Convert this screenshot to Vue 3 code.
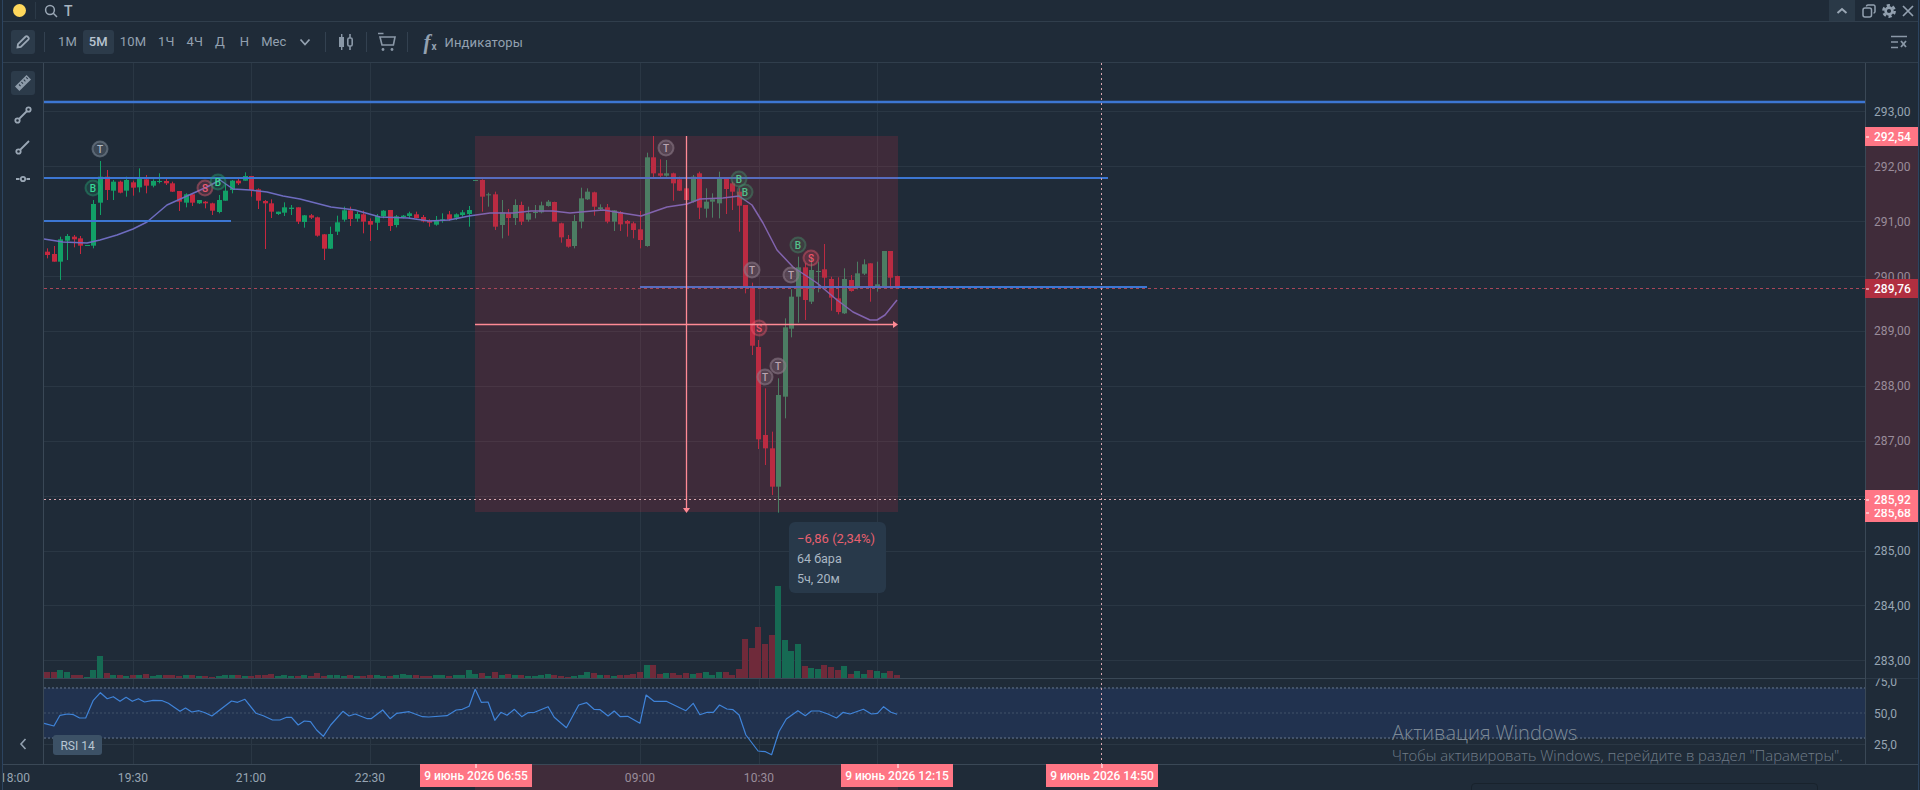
<script setup>
const intervals = [
  { t: '1М' }, { t: '5М', on: true }, { t: '10М' }, { t: '1Ч' }, { t: '4Ч' }, { t: 'Д' }, { t: 'Н', gap: true }, { t: 'Мес' }
]

const seg = (off, rows) => rows.map(r => ({ wt: off + r[0] / 3, bt: off + r[1] / 3, bb: off + r[2] / 3, wb: off + r[3] / 3, up: r[4] === 1 }))

const rowsA = [
  [355,365,375,385,0],[348,372,395,395,0],[320,328,395,450,1],[312,318,332,390,1],[315,320,328,352,0],[318,325,347,372,0],
  [345,345,347,347,1],[210,222,347,355,1],[93,140,218,255,1],[120,140,180,210,0],[150,155,182,210,1],[152,155,188,190,0],
  [140,150,182,200,1],[152,157,173,197,0],[115,145,172,187,1],[135,148,167,190,0],[148,153,167,172,1],[130,153,156,160,1],
  [145,153,160,165,0],[155,160,185,186,0],[183,183,215,243,0],[190,193,218,232,1],[190,193,218,228,0],[210,210,220,222,1],
  [213,215,220,235,0],[218,220,242,255,0],[195,210,246,250,1],[160,182,212,212,1],[150,152,180,190,1],[145,152,160,165,0],
  [127,138,152,152,1],[138,138,180,200,0],[175,178,212,237,0],[210,213,220,357,0],[208,220,245,264,0],[245,245,252,255,1],
  [217,232,248,258,1],[225,233,237,255,1],[232,232,275,282,0]
]
const rowsB = [
  [195,196,216,233,1],[192,196,203,207,0],[200,202,257,260,0],[252,253,296,330,0],[230,252,296,297,1],[197,217,245,255,1],
  [170,181,209,215,1],[170,181,207,228,0],[185,192,206,215,1],[182,193,215,250,0],[205,213,224,273,0],[192,198,218,240,1],
  [180,182,199,205,1],[180,180,228,243,0],[195,199,225,232,1],[195,197,201,205,1],[185,190,198,207,1],[185,193,204,205,0],
  [195,201,214,217,0],[208,212,218,230,0],[198,212,224,227,1],[190,208,211,218,1],[183,193,209,213,0],[190,193,203,210,1],
  [180,187,195,200,1],[168,180,192,230,1],[90,90,92,92,1],[88,90,140,185,0],[128,133,136,170,1],[125,133,230,240,0],
  [150,187,225,265,1],[177,190,204,257,0],[148,165,204,225,1],[155,165,215,225,0],[170,190,209,215,1],[165,186,189,205,1],
  [155,166,187,190,1],[150,155,168,170,1],[155,156,215,215,0],[218,220,262,278,0],[255,267,290,293,0],[195,213,288,295,1],
  [113,145,215,235,1],[115,125,148,150,1],[125,127,170,197,0],[163,172,177,182,1],[162,172,215,220,0],[180,181,215,243,1],
  [183,186,223,243,0],[210,213,221,260,0]
]
const rowsC = [
  [275,280,300,325,0],[243,298,330,355,0],[68,82,348,350,1],[18,82,130,145,0],[88,130,137,145,0],[90,130,137,140,1],
  [128,130,160,212,0],[140,148,182,183,0],[175,175,210,212,0],[135,140,215,218,1],[125,130,233,267,0],[175,215,236,263,1],
  [190,208,215,263,1],[125,143,220,265,1],[145,147,177,252,0],[155,160,185,240,0],[175,185,227,305,0],[225,225,472,490,0],
  [458,470,647,675,0],[630,651,928,957,0],[775,915,955,1005,0],[905,955,1070,1095,0],[745,795,1070,1148,1],[565,592,800,865,1],
  [478,500,596,622,1],[380,412,500,578,1],[400,412,510,570,0],[380,420,515,522,1],[395,423,426,487,1],[342,418,443,470,0],
  [440,447,503,542,0],[442,505,546,553,0],[415,447,550,552,1],[435,450,483,485,0],[395,430,473,478,1],[388,403,431,435,1],
  [400,400,472,515,0],[395,463,472,485,1],[363,363,468,470,1],[363,363,443,470,0],[437,438,475,475,0]
]

const volHead = [
  6,6,8,6,3,3,1,8,22,5,3,3,2,3,3,4,2,3,3,3,2,3,3,2,2,1,2,3,3,3,2,2,3,3,4,2,
  3,2,2,3,2,5,2,3,3,2,3,2,2,3,3,2,2,3,4,3,3,2,2,3,3,2,3,3,8,4,5,2,6,3,4,3,3,2,2,3,4,3,2,1,2,3,6,5,3,3,2,3,3,4,6
]
const volTail = [
  13,13,4,5,5,3,
  5,4,5,6,3,6,6,3,9,39,30,51,34,43,92,38,27,34,12,10,9,13,11,8,12,4,7,4,8,7,5,7,3
]

const candles = [...seg(130, rowsA), ...seg(150, rowsB), ...seg(130, rowsC)].map((c, i) => {
  const x = Math.round(47.3 + i * 6.585)
  const v = i >= 91 ? volTail[i - 91] : (volHead[i] ?? 2)
  return { ...c, id: i, x, h: Math.max(c.bb - c.bt, 1), v, cls: (c.up ? 'cg' : 'cr') + (x >= 475 ? ' inbox' : '') }
})

const ma = '44,239 63,242 87,243 100,240 117,235 133,229 147,222 167,205 187,196 207,187 220,180 233,189 250,190 267,192 283,196 300,199 331,207 355,210 380,217 408,218 429,221 449,220 469,216 490,213 513,213 531,211 553,211 570,213 603,210 641,216 667,207 687,204 700,199 723,198 739,196 752,205 763,223 777,250 793,267 817,283 837,300 853,312 870,320 877,320 885,315 897,300'

const rsiRaw = [[72,250],[88,258],[98,226],[110,222],[120,224],[130,234],[140,234],[152,182],[164,158],[175,176],[185,170],[196,184],[206,172],[216,184],[226,176],[236,186],[250,181],[265,182],[275,190],[294,214],[303,204],[313,216],[325,212],[335,218],[346,228],[378,183],[388,187],[400,178],[418,220],[430,227],[445,240],[457,240],[468,232],[476,232],[487,255],[497,243],[507,245],[517,270],[528,289],[540,255],[560,214],[570,228],[580,222],[600,236],[606,236],[625,210],[637,236],[648,220],[668,215],[690,230],[700,231],[730,227],[745,210],[755,208],[766,199],[776,148],[786,187],[797,186],[808,241],[818,217],[828,226],[840,208],[852,230],[862,218],[873,217],[895,200],[905,232],[925,263],[945,195],[958,188],[970,208],[980,209],[993,228],[1003,213],[1013,230],[1025,229],[1045,250],[1055,165],[1068,184],[1088,184],[1120,212],[1132,190],[1143,224],[1155,217],[1165,217],[1175,195],[1187,207],[1197,209],[1207,225],[1218,285],[1238,333],[1250,335],[1260,344],[1272,275],[1284,237],[1303,212],[1315,227],[1325,213],[1338,213],[1352,222],[1366,234],[1377,217],[1388,222],[1410,208],[1423,222],[1433,220],[1443,200],[1455,217],[1465,223]]
const rsi = rsiRaw.map(([x, y]) => `${(x / 1.633).toFixed(1)},${(640 + y / 3).toFixed(1)}`).join(' ')

const priceY = p => 111.3 + (293 - p) * 54.9
const prices = [293, 292, 291, 290, 289, 288, 287, 286, 285, 284, 283]
const hGrid = prices.map(p => Math.round(priceY(p)) + 0.5)
const priceLabels = prices.filter(p => p !== 286).map(p => ({
  y: priceY(p) + 4.5,
  t: p + ',00',
  band: p <= 292 && p >= 286
}))
const vGrid = [133.5, 251.5, 370.5, 640.5, 759.5, 877.5]

const times = [
  { x: 15, t: '18:00' }, { x: 133, t: '19:30' }, { x: 251, t: '21:00' }, { x: 370, t: '22:30' },
  { x: 640, t: '09:00', band: true }, { x: 759, t: '10:30', band: true }
]
const timeTags = [
  { x: 420, cx: 476, t: '9 июнь 2026 06:55', tick: 475.5 },
  { x: 841, cx: 897, t: '9 июнь 2026 12:15', tick: 897.5 },
  { x: 1046, cx: 1102, t: '9 июнь 2026 14:50', tick: 1101.5 }
]
const badges = [
  { x: 100, y: 149, t: 'T', k: 'bt' }, { x: 93, y: 188, t: 'B', k: 'bb' }, { x: 205, y: 188, t: 'S', k: 'bs' },
  { x: 218, y: 182, t: 'B', k: 'bb' }, { x: 666, y: 148, t: 'T', k: 'bt' }, { x: 739, y: 179, t: 'B', k: 'bb' },
  { x: 745, y: 192, t: 'B', k: 'bb' }, { x: 752, y: 270, t: 'T', k: 'bt' }, { x: 798, y: 245, t: 'B', k: 'bb' },
  { x: 811, y: 258, t: 'S', k: 'bs' }, { x: 791, y: 275, t: 'T', k: 'bt' }, { x: 759, y: 328, t: 'S', k: 'bs' },
  { x: 765, y: 377, t: 'T', k: 'bt' }, { x: 778, y: 366, t: 'T', k: 'bt' }
]
const priceTags = [
  { y: 505, h: 17, ty: 517, t: '285,68', c: 'pink', tick: 512.5 },
  { y: 490, h: 19, ty: 504, t: '285,92', c: 'pink', tick: 499.5 },
  { y: 279, h: 19, ty: 293, t: '289,76', c: 'dark', tick: 288.5 },
  { y: 127, h: 19, ty: 141, t: '292,54', c: 'pink', tick: 136.5 }
]
</script>

<template>
  <div class="app">
    <header class="topbar">
      <span class="dot"></span>
      <span class="vsep"></span>
      <svg class="search" width="14" height="14" viewBox="0 0 14 14"><circle cx="6" cy="6" r="4.4" /><path d="M9.3 9.3 13 13" /></svg>
      <span class="ticker">T</span>
      <div class="topright">
        <button class="collapse"><svg width="14" height="14" viewBox="0 0 14 14"><path d="M2.5 9 7 5l4.5 4" /></svg></button>
        <svg class="wicon" width="14" height="14" viewBox="0 0 14 14"><rect x="1" y="4" width="8.5" height="9" rx="2" /><path d="M4.5 2.5V2.4A1.4 1.4 0 0 1 6 1h5.6A1.4 1.4 0 0 1 13 2.4v5.2A1.4 1.4 0 0 1 11.6 9h-.1" /></svg>
        <svg class="gear" width="14" height="14" viewBox="0 0 14 14"><circle class="teeth" cx="7" cy="7" r="5.6" /><circle class="ring" cx="7" cy="7" r="3.4" /></svg>
        <svg class="xicon" width="14" height="14" viewBox="0 0 14 14"><path d="M2 2l10 10M12 2 2 12" /></svg>
      </div>
    </header>

    <nav class="toolbar">
      <button class="ibtn">
        <svg width="16" height="16" viewBox="0 0 16 16"><path d="M2.5 13.5 3 10.2 10.7 2.5a1.2 1.2 0 0 1 1.7 0l1.1 1.1a1.2 1.2 0 0 1 0 1.7L5.8 13z" /></svg>
      </button>
      <span class="sep first"></span>
      <button v-for="b in intervals" :key="b.t" class="tf" :class="{ on: b.on, gap: b.gap }">{{ b.t }}</button>
      <button class="more"><svg width="12" height="12" viewBox="0 0 12 12"><path d="M1.5 3.5 6 8.5l4.500-5" /></svg></button>
      <span class="sep"></span>
      <svg class="tool" width="20" height="20" viewBox="0 0 20 20">
        <path class="solid" d="M5 2h1.4v3H8v10H6.4v3H5v-3H3V5h2z" />
        <path class="thin" d="M14 2v4M14 14v4" />
        <rect class="thin" x="11.8" y="6" width="4.4" height="8" rx="1.4" />
      </svg>
      <span class="sep"></span>
      <svg class="tool" width="20" height="20" viewBox="0 0 20 20">
        <path class="thin" d="M1 1.5h5.5M3 5h15l-1.6 8H5z" />
        <circle class="solid" cx="6" cy="17.5" r="1.4" /><circle class="solid" cx="15" cy="17.5" r="1.4" />
      </svg>
      <span class="sep"></span>
      <span class="fx"><i>f</i><b>x</b></span>
      <span class="indic">Индикаторы</span>
      <svg class="clear" width="18" height="14" viewBox="0 0 18 14">
        <path class="thin" d="M1 1.5h16M1 7h7M1 12.5h7" />
        <path class="thin x" d="M11 6l5 6M16 6l-5 6" />
      </svg>
    </nav>

    <main class="main">
      <aside class="tools">
        <button class="ibtn">
          <svg width="18" height="18" viewBox="0 0 18 18"><path class="solid" d="M1 12.6 12.6 1 17 5.4 5.4 17z" /><path class="notch" d="M5 10.5l1.6 1.6M7.4 8.1 9 9.7M9.8 5.7l1.6 1.6M12.2 3.3l1.6 1.6" /></svg>
        </button>
        <button class="ibtn plain">
          <svg width="18" height="18" viewBox="0 0 18 18"><circle cx="3.5" cy="14.5" r="2.2" /><circle cx="14.5" cy="3.5" r="2.2" /><path d="M5 13 13 5" /></svg>
        </button>
        <button class="ibtn plain">
          <svg width="18" height="18" viewBox="0 0 18 18"><circle cx="4.5" cy="13.5" r="2.2" /><path d="M6 12 15 3" /></svg>
        </button>
        <button class="ibtn plain">
          <svg width="18" height="18" viewBox="0 0 18 18"><circle cx="9" cy="9" r="2.2" /><path d="M2 9h3.5M12.5 9H16" /></svg>
        </button>
        <button class="back"><svg width="10" height="14" viewBox="0 0 10 14"><path d="M7.5 2 3 7l4.500 5" /></svg></button>
      </aside>

      <div class="chart">
        <svg class="plot" width="1874" height="727" viewBox="44 63 1874 727">
          <g class="grid">
            <line v-for="y in hGrid" :key="'h' + y" x1="44" x2="1865" :y1="y" :y2="y" />
            <line x1="44" x2="1865" y1="744.5" y2="744.5" />
            <line v-for="x in vGrid" :key="'v' + x" :x1="x" :x2="x" y1="63" y2="764" />
          </g>

          <rect class="rsiband" x="44" y="688" width="1821" height="50" />
          <line class="dot2" x1="44" x2="1865" y1="688" y2="688" />
          <line class="dot1" x1="44" x2="1865" y1="713" y2="713" />
          <line class="dot2" x1="44" x2="1865" y1="738" y2="738" />

          <g>
            <rect v-for="c in candles" :key="'v' + c.id" :class="c.up ? 'vg' : 'vr'" :x="c.x - 3" :y="678 - c.v" width="6" :height="c.v" />
          </g>
          <g>
            <g v-for="c in candles" :key="c.id" :class="c.cls">
              <rect :x="c.x" :y="c.wt" width="1" :height="c.wb - c.wt" />
              <rect :x="c.x - 2" :y="c.bt" width="5" :height="c.h" />
            </g>
          </g>
          <polyline class="ma" :points="ma" />

          <line class="blue" x1="44" x2="1865" y1="102" y2="102" />
          <line class="blue thinb" x1="44" x2="1108" y1="178" y2="178" />
          <line class="blue thinb" x1="44" x2="231" y1="221" y2="221" />
          <line class="blue thinb" x1="640" x2="1147" y1="287" y2="287" />

          <g v-for="(b, i) in badges" :key="'b' + i" :class="['badge', b.k]">
            <circle :cx="b.x" :cy="b.y" r="7.5" />
            <text :x="b.x" :y="b.y + 3.5" text-anchor="middle">{{ b.t }}</text>
          </g>

          <rect class="box" x="475" y="136" width="423" height="376" />

          <line class="dash-red" x1="44" x2="1865" y1="288.5" y2="288.5" />
          <line class="dash-pink" x1="44" x2="1865" y1="499.5" y2="499.5" />
          <line class="dash-pink" x1="1101.5" x2="1101.5" y1="63" y2="764" />

          <line class="arrow" x1="686.5" x2="686.5" y1="136" y2="509" />
          <path class="head" d="M683 508h7l-3.500 5z" />
          <line class="arrow" x1="475" x2="894" y1="324.500" y2="324.500" />
          <path class="head" d="M893 321v7l5-3.500z" />

          <polyline class="rsi" :points="rsi" />

          <rect class="rsitag" x="53" y="735" width="49" height="20" rx="3" />
          <text class="rsitext" x="77.500" y="749.500" text-anchor="middle">RSI 14</text>

          <rect class="axisband" x="1866" y="136" width="52" height="376" />
          <rect class="axisband" x="475" y="765" width="423" height="25" />

          <line class="axisline" x1="43.500" x2="43.500" y1="63" y2="764" />
          <line class="axisline" x1="1865.500" x2="1865.500" y1="63" y2="764" />
          <line class="axisline" x1="44" x2="1918" y1="678.500" y2="678.500" />
          <line class="axisline" x1="3" x2="1918" y1="764.500" y2="764.500" />

          <text v-for="p in priceLabels" :key="p.t" class="axt" :class="{ dim: p.band }" x="1874" :y="p.y">{{ p.t }}</text>
          <text class="axt" x="1874" y="686">75,0</text>
          <rect class="bg" x="1866" y="667" width="52" height="11.500" />
          <text class="axt" x="1874" y="718">50,0</text>
          <text class="axt" x="1874" y="749">25,0</text>

          <g v-for="p in priceTags" :key="p.t">
            <rect :class="p.c" x="1865" :y="p.y" width="53" :height="p.h" />
            <rect class="wtick" x="1866" :y="p.tick" width="3" height="1" />
            <text class="tagt" x="1874" :y="p.ty">{{ p.t }}</text>
          </g>

          <text v-for="t in times" :key="t.t" class="axt" :class="{ dim: t.band }" :x="t.x" y="782" text-anchor="middle">{{ t.t }}</text>
          <g v-for="t in timeTags" :key="t.t">
            <rect class="pink" :x="t.x" y="764" width="112" height="23" />
            <rect class="wtick" :x="t.tick" y="764" width="1" height="4" />
            <text class="tagt" :x="t.cx" y="780" text-anchor="middle">{{ t.t }}</text>
          </g>
        </svg>

        <div class="tip">
          <div class="tipred">−6,86 (2,34%)</div>
          <div>64 бара</div>
          <div>5ч, 20м</div>
        </div>

        <div class="shade"></div>
        <div class="wm">
          <div class="wm1">Активация Windows</div>
          <div class="wm2">Чтобы активировать Windows, перейдите в раздел "Параметры".</div>
        </div>
      </div>
    </main>
  </div>
</template>

<style>
html, body { margin: 0; background: #1f2b38; }
</style>

<style scoped>
.app {
  box-sizing: border-box;
  width: 1917px;
  height: 790px;
  margin-left: 2px;
  border-left: 1px solid #2c4460;
  border-right: 1px solid #2c4460;
  background: #1f2b38;
  overflow: hidden;
  font-family: Roboto, "Noto Sans", sans-serif;
  color: #93a1b0;
}
button { border: 0; background: none; padding: 0; margin: 0; font: inherit; color: inherit; display: flex; align-items: center; justify-content: center; }

.topbar {
  box-sizing: border-box;
  height: 22px;
  display: flex;
  align-items: center;
  padding-left: 10px;
  border-bottom: 1px solid #303e4c;
}
.dot { width: 13px; height: 13px; border-radius: 50%; background: #ffd85c; }
.vsep { width: 1px; height: 17px; background: #2c3a48; margin: 0 8px 0 9px; }
.search { fill: none; stroke: #9aa7b5; stroke-width: 1.500; }
.ticker { margin-left: 6px; font-size: 14px; font-weight: 500; color: #a8b4c0; }
.topright { margin-left: auto; display: flex; align-items: center; height: 21px; }
.collapse { width: 26px; height: 21px; background: #2a3947; margin-right: 7px; }
.collapse svg { fill: none; stroke: #9aa7b5; stroke-width: 2; }
.wicon { fill: none; stroke: #93a1b0; stroke-width: 1.500; margin-right: 6px; }
.gear { fill: none; margin-right: 5px; }
.teeth { stroke: #93a1b0; stroke-width: 2.600; stroke-dasharray: 3.200 2.660; }
.ring { stroke: #93a1b0; stroke-width: 2.600; }
.xicon { fill: none; stroke: #93a1b0; stroke-width: 1.700; margin-right: 3px; }

.toolbar {
  box-sizing: border-box;
  height: 41px;
  display: flex;
  align-items: center;
  padding-left: 8px;
  border-bottom: 1px solid #303e4c;
  font-size: 13px;
}
.ibtn { width: 24px; height: 24px; border-radius: 3px; background: #2c3b4a; flex: none; }
.ibtn svg { fill: none; stroke: #9aa7b5; stroke-width: 1.800; }
.ibtn svg .solid { fill: #8d9ba9; stroke: none; }
.ibtn svg .notch { stroke: #2c3b4a; stroke-width: 1.100; }
.ibtn.plain { background: none; }
.sep { width: 1px; height: 20px; background: #334150; margin: 0 10px; flex: none; }
.sep.first { margin: 0 7px 0 9px; }
.tf { height: 24px; padding: 0 6px; border-radius: 3px; font-size: 13px; line-height: 24px; letter-spacing: 0.100px; }
.tf.gap { margin-left: 3px; }
.tf.on { background: #2c3b4a; color: #b9c5d1; font-weight: 500; }
.more { width: 24px; height: 24px; margin-right: -2px; }
.more svg { fill: none; stroke: #93a1b0; stroke-width: 1.800; }
.tool { flex: none; }
.tool .solid { fill: #8a98a7; stroke: none; }
.tool .thin { fill: none; stroke: #8a98a7; stroke-width: 1.600; }
.fx { display: flex; align-items: flex-end; margin-left: 6px; width: 21px; height: 22px; color: #93a1b0; flex: none; }
.fx i { font: italic 700 21px/22px "Liberation Serif", serif; }
.fx b { font: 700 10px/12px Roboto, sans-serif; margin-left: 1px; }
.indic { margin-left: 0; font-size: 13px; letter-spacing: 0.150px; }
.clear { margin-left: auto; margin-right: 10px; flex: none; }
.clear .thin { fill: none; stroke: #8a98a7; stroke-width: 1.500; }
.clear .x { stroke-width: 1.800; }

.main { display: flex; height: 727px; }
.tools {
  box-sizing: border-box;
  width: 41px;
  flex: none;
  display: flex;
  flex-direction: column;
  gap: 8px;
  padding: 8px 0 0 8px;
}
.back { margin-top: auto; margin-bottom: 39px; width: 24px; height: 14px; }
.back svg { fill: none; stroke: #93a1b0; stroke-width: 1.600; }

.chart { position: relative; width: 1874px; flex: none; }
.plot { display: block; overflow: visible; font-family: Roboto, sans-serif; }
.grid line { stroke: #2a3744; stroke-width: 1; }
.rsiband { fill: #21324f; }
.dot2 { stroke: #43536a; stroke-width: 2; stroke-dasharray: 2 2; }
.dot1 { stroke: #43536a; stroke-width: 1; stroke-dasharray: 2 2; }
.vg { fill: #166a53; }
.vr { fill: #6f2a3a; }
.cg rect { fill: #12a067; }
.cr rect { fill: #c6283f; }
.cg.inbox rect { fill: #2f8a68; }
.cr.inbox rect { fill: #b02a42; }
.ma { fill: none; stroke: #6e6cc0; stroke-width: 1.500; stroke-linejoin: round; }
.rsi { fill: none; stroke: #3f83d8; stroke-width: 1.200; stroke-linejoin: round; }
.blue { stroke: #3c76d2; stroke-width: 2.600; }
.blue.thinb { stroke-width: 2.200; }
.box { fill: rgba(255, 50, 70, 0.14); }
.dash-red { stroke: #a84658; stroke-dasharray: 3 3; }
.dash-pink { stroke: #d9a5ae; stroke-dasharray: 2 3; }
.arrow { stroke: #ff8a95; stroke-width: 1.300; }
.head { fill: #ff8a95; }
.badge circle { stroke-width: 2; }
.badge text { font-size: 10px; font-weight: 500; }
.bt circle { fill: rgba(105, 118, 132, 0.38); stroke: rgba(125, 138, 152, 0.55); }
.bt text { fill: #aeb8c2; }
.bb circle { fill: rgba(30, 170, 110, 0.16); stroke: rgba(40, 170, 120, 0.4); }
.bb text { fill: #38d896; }
.bs circle { fill: rgba(240, 80, 105, 0.18); stroke: rgba(240, 100, 120, 0.4); }
.bs text { fill: #ec5a70; }
.rsitag { fill: #3c5166; }
.rsitext { fill: #b8c6d2; font-size: 12px; }
.axisband { fill: #402c3a; }
.axisline { stroke: #3a4856; stroke-width: 1; }
.axt { fill: #97a5b3; font-size: 12px; letter-spacing: 0.100px; }
.axt.dim { fill: #9a8c9a; }
.bg { fill: #1f2b38; }
.pink { fill: #ff7685; }
.dark { fill: #b12f40; }
.wtick { fill: #fff; }
.tagt { fill: #fff; font-size: 12px; font-weight: 500; }

.tip {
  position: absolute;
  left: 745px;
  top: 459px;
  box-sizing: border-box;
  width: 97px;
  height: 71px;
  padding: 7px 8px;
  border-radius: 6px;
  background: #28394a;
  color: #aab7c3;
  font-size: 12.500px;
  line-height: 20px;
  white-space: nowrap;
}
.tipred { color: #e7606f; font-size: 13px; }

.shade {
  position: absolute;
  left: 1427px;
  top: 720px;
  width: 345px;
  height: 20px;
  border: 1px solid #18222c;
  border-radius: 4px;
}
.wm {
  position: absolute;
  left: 1348px;
  top: 658px;
  pointer-events: none;
  font-family: "Open Sans", "Noto Sans", sans-serif;
  font-weight: 300;
  white-space: nowrap;
}
.wm1 { font-size: 20px; line-height: 24px; color: #7e8a96; }
.wm2 { font-size: 14.800px; line-height: 20px; color: #707c88; }
</style>
